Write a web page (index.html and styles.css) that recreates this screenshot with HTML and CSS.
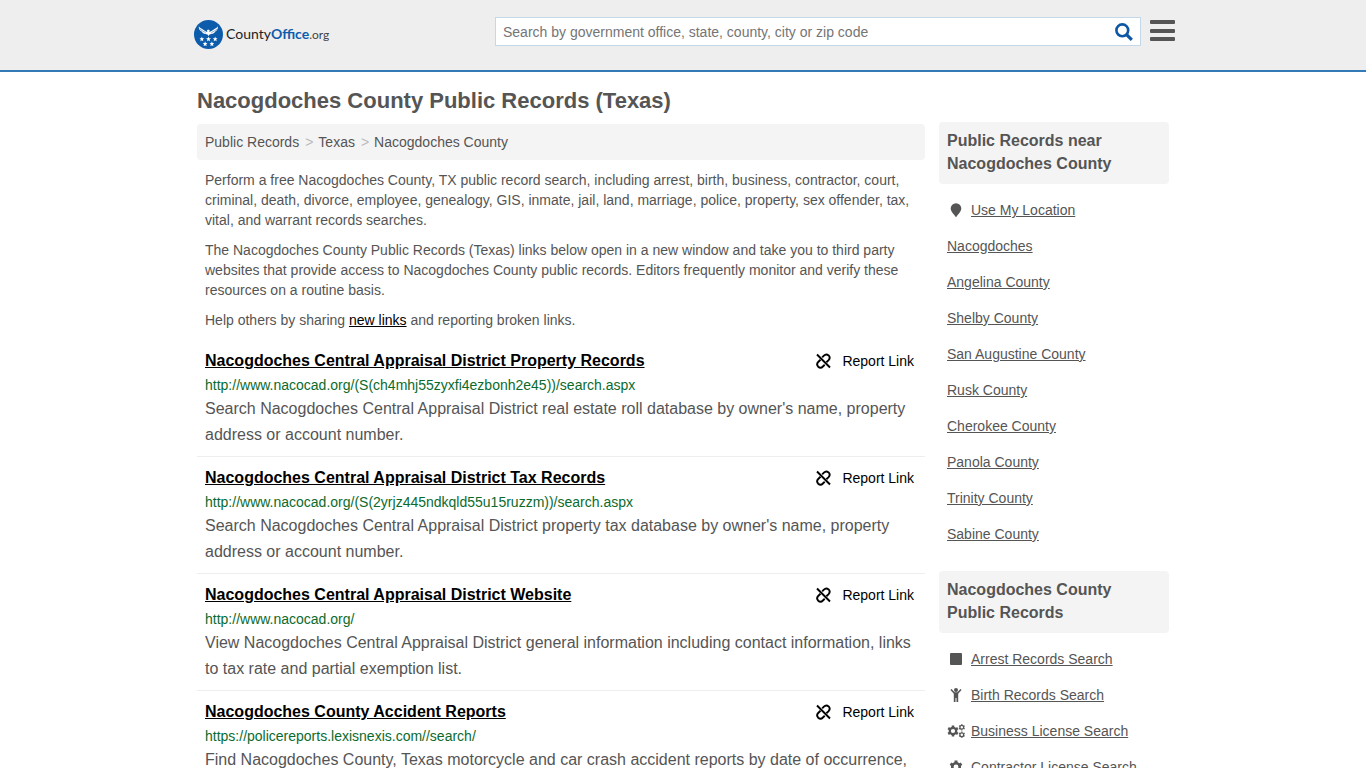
FILE: index.html
```html
<!DOCTYPE html>
<html lang="en">
<head>
<meta charset="utf-8">
<meta name="viewport" content="width=device-width, initial-scale=1">
<title>Nacogdoches County Public Records (Texas)</title>
<link rel="stylesheet" href="styles.css">
</head>
<body>
<svg class="defs" aria-hidden="true">
  <symbol id="unlink" viewBox="0 0 16 16">
    <g fill="none" stroke="currentColor" stroke-width="1.900">
      <path d="M2 1.500l13 13"/>
      <path d="M7.200 4.400l1.700-1.700C10.200 1.400 12.200 1.300 13.600 2.400c1.400 1.500 1.300 3.300 0 4.700L11.400 9.200"/>
      <path d="M5.500 6.800L3.200 9c-1.300 1.400-1.400 3.200 0 4.700 1.400 1.200 3.400 1.100 4.700-.2l1.800-1.700"/>
    </g>
  </symbol>
  <symbol id="gear" viewBox="0 0 16 16">
    <g fill="none" stroke="currentColor">
      <circle cx="8" cy="8" r="4.300" stroke-width="3"/>
      <path d="M8 .6v3M8 12.400v3M1.600 4.300l2.600 1.500M11.800 10.200l2.600 1.500M1.600 11.700l2.600-1.500M11.800 5.800l2.600-1.500" stroke-width="3.400"/>
    </g>
  </symbol>
  <symbol id="star" viewBox="0 0 10 10">
    <path d="M5 0l1.300 3.500L10 3.800 7.100 6.100 8.100 10 5 7.800 1.900 10l1-3.900L0 3.800l3.700-.3z" fill="currentColor"/>
  </symbol>
</svg>

<header class="site-header">
  <div class="header-inner">
    <a class="logo" href="#" aria-label="CountyOffice.org home">
      <svg class="logo-mark" viewBox="0 0 30 30" aria-hidden="true">
        <circle cx="15" cy="15" r="15" fill="#0d5cab"/>
        <path d="M5 6.500c1 1.800 3 2.600 5 3.800 1.600.9 2.600 1.700 3.700 2.200l-.2-1.900 1.100-.9 1.700.8-.5 1.900c1.100-.5 2.400-1.200 3.900-2.100 2-1.200 4-2 5-3.800.4 2.700-1 4.600-2.700 5.400-.8 1.700-2.200 2.300-3.700 2.400-.8.600-1.500.7-2.300.7l-1 1.600-1-1.600c-.8 0-1.500-.1-2.300-.7-1.500-.1-2.900-.7-3.700-2.400C6 11.100 4.600 9.200 5 6.500z" fill="#fff"/>
        <path d="M6 9.200c2 2 4 2.500 6 3.800M24 9.200c-2 2-4 2.500-6 3.800" stroke="#0d5cab" stroke-width=".5" fill="none"/>
        <g color="#fff">
          <use href="#star" x="5.500" y="17" width="5.200" height="5.200"/>
          <use href="#star" x="12.400" y="17" width="5.200" height="5.200"/>
          <use href="#star" x="19.300" y="17" width="5.200" height="5.200"/>
          <use href="#star" x="8.900" y="22" width="5.200" height="5.200"/>
          <use href="#star" x="15.900" y="22" width="5.200" height="5.200"/>
        </g>
      </svg>
      <span class="logo-text">County<b>Office</b><span class="logo-tld">.org</span></span>
    </a>
    <form class="search" role="search">
      <input class="search-input" type="text" aria-label="Search" placeholder="Search by government office, state, county, city or zip code">
      <button class="search-button" type="button" aria-label="Search">
        <svg viewBox="0 0 18 18" width="18" height="18" fill="none" stroke="#0d57a5" aria-hidden="true"><circle cx="7.300" cy="7.300" r="5.900" stroke-width="2.600"/><path d="M11.600 11.600l5.200 5.200" stroke-width="3.200"/></svg>
      </button>
    </form>
    <button class="menu-button" type="button" aria-label="Menu">
      <svg viewBox="0 0 25 22" width="25" height="22" fill="#555" aria-hidden="true"><rect width="25" height="4" rx="1"/><rect y="9" width="25" height="4" rx="1"/><rect y="17" width="25" height="4" rx="1"/></svg>
    </button>
  </div>
</header>

<div class="page">
  <main class="main">
    <h1>Nacogdoches County Public Records (Texas)</h1>
    <nav class="breadcrumb" aria-label="Breadcrumb">
      <a href="#">Public Records</a><span class="sep">&gt;</span><a href="#">Texas</a><span class="sep">&gt;</span><a href="#">Nacogdoches County</a>
    </nav>
    <div class="intro">
      <p>Perform a free Nacogdoches County, TX public record search, including arrest, birth, business, contractor, court, criminal, death, divorce, employee, genealogy, GIS, inmate, jail, land, marriage, police, property, sex offender, tax, vital, and warrant records searches.</p>
      <p>The Nacogdoches County Public Records (Texas) links below open in a new window and take you to third party websites that provide access to Nacogdoches County public records. Editors frequently monitor and verify these resources on a routine basis.</p>
      <p>Help others by sharing <a href="#">new links</a> and reporting broken links.</p>
    </div>

    <article class="record">
      <div class="record-head">
        <h2><a href="#">Nacogdoches Central Appraisal District Property Records</a></h2>
        <a class="report" href="#"><svg class="report-icon" aria-hidden="true"><use href="#unlink"/></svg>Report Link</a>
      </div>
      <div class="record-url">http://www.nacocad.org/(S(ch4mhj55zyxfi4ezbonh2e45))/search.aspx</div>
      <p class="record-text">Search Nacogdoches Central Appraisal District real estate roll database by owner's name, property address or account number.</p>
    </article>
    <article class="record">
      <div class="record-head">
        <h2><a href="#">Nacogdoches Central Appraisal District Tax Records</a></h2>
        <a class="report" href="#"><svg class="report-icon" aria-hidden="true"><use href="#unlink"/></svg>Report Link</a>
      </div>
      <div class="record-url">http://www.nacocad.org/(S(2yrjz445ndkqld55u15ruzzm))/search.aspx</div>
      <p class="record-text">Search Nacogdoches Central Appraisal District property tax database by owner's name, property address or account number.</p>
    </article>
    <article class="record">
      <div class="record-head">
        <h2><a href="#">Nacogdoches Central Appraisal District Website</a></h2>
        <a class="report" href="#"><svg class="report-icon" aria-hidden="true"><use href="#unlink"/></svg>Report Link</a>
      </div>
      <div class="record-url">http://www.nacocad.org/</div>
      <p class="record-text">View Nacogdoches Central Appraisal District general information including contact information, links to tax rate and partial exemption list.</p>
    </article>
    <article class="record">
      <div class="record-head">
        <h2><a href="#">Nacogdoches County Accident Reports</a></h2>
        <a class="report" href="#"><svg class="report-icon" aria-hidden="true"><use href="#unlink"/></svg>Report Link</a>
      </div>
      <div class="record-url">https://policereports.lexisnexis.com//search/</div>
      <p class="record-text">Find Nacogdoches County, Texas motorcycle and car crash accident reports by date of occurrence,</p>
    </article>
  </main>

  <aside class="sidebar">
    <section>
      <h2 class="side-title">Public Records near Nacogdoches County</h2>
      <ul class="side-list">
        <li><svg class="side-icon" viewBox="0 0 18 16" aria-hidden="true"><path d="M9 1.200a5.300 5.300 0 0 1 5.300 5.300C14.300 9.500 11 12.500 9 15.200 7 12.500 3.700 9.500 3.700 6.500A5.300 5.300 0 0 1 9 1.200z" fill="currentColor"/></svg><a href="#">Use My Location</a></li>
        <li><a href="#">Nacogdoches</a></li>
        <li><a href="#">Angelina County</a></li>
        <li><a href="#">Shelby County</a></li>
        <li><a href="#">San Augustine County</a></li>
        <li><a href="#">Rusk County</a></li>
        <li><a href="#">Cherokee County</a></li>
        <li><a href="#">Panola County</a></li>
        <li><a href="#">Trinity County</a></li>
        <li><a href="#">Sabine County</a></li>
      </ul>
    </section>
    <section>
      <h2 class="side-title">Nacogdoches County Public Records</h2>
      <ul class="side-list">
        <li><svg class="side-icon" viewBox="0 0 18 16" aria-hidden="true"><rect x="3" y="2" width="12" height="12" rx="1" fill="currentColor"/></svg><a href="#">Arrest Records Search</a></li>
        <li><svg class="side-icon" viewBox="0 0 18 16" aria-hidden="true"><circle cx="9" cy="3" r="2" fill="currentColor"/><path d="M4 2.500l3.500 3.700h3L14 2.500" fill="none" stroke="currentColor" stroke-width="1.600"/><path d="M6.800 5.500h4.400V15H9.500v-4h-1v4H6.800z" fill="currentColor"/></svg><a href="#">Birth Records Search</a></li>
        <li><svg class="side-icon" viewBox="0 0 18 16" aria-hidden="true"><use href="#gear" x="0" y="2" width="12" height="12"/><g fill="none" stroke="currentColor" stroke-width="1.300"><circle cx="14.800" cy="4.300" r="1.900"/><circle cx="14.800" cy="11.700" r="1.900"/></g><path d="M14.800 1.200v1M14.800 6.400v1M12 2.700l1 .6M16.600 5.300l1 .6M12 5.900l1-.6M16.600 3.300l1-.6M14.800 8.600v1M14.800 13.800v1M12 10.100l1 .6M16.600 12.700l1 .6M12 13.300l1-.6M16.600 10.700l1-.6" stroke="currentColor" stroke-width="1.200"/></svg><a href="#">Business License Search</a></li>
        <li><svg class="side-icon" viewBox="0 0 18 16" aria-hidden="true"><use href="#gear" x="2" y="1" width="14" height="14"/></svg><a href="#">Contractor License Search</a></li>
      </ul>
    </section>
  </aside>
</div>
</body>
</html>
```
FILE: styles.css
```css
* { box-sizing: border-box; }

body {
  margin: 0;
  background: #fff;
  color: #555;
  font: 14px/20px "Liberation Sans", Arial, sans-serif;
}

h1, h2, p, ul { margin: 0; padding: 0; }
a { color: inherit; }
button { border: 0; padding: 0; background: none; cursor: pointer; }
svg { display: block; }
.defs { display: none; }

.site-header {
  background: #eee;
  border-bottom: 2px solid #337ab7;
}
.header-inner {
  display: flex;
  align-items: flex-start;
  max-width: 982px;
  margin: 0 auto;
  padding: 17px 0 21px 2px;
}
.logo {
  display: flex;
  align-items: center;
  gap: 3px;
  padding-top: 3px;
  color: #222;
  text-decoration: none;
}
.logo-mark { width: 29px; height: 29px; }
.logo-text { font: 14px/20px Lato, sans-serif; }
.logo-text b { color: #0d5cab; }
.logo-tld { color: #444; font-size: 12px; }

.search {
  display: flex;
  flex: 0 1 646px;
  height: 29px;
  margin-left: auto;
  background: #fff;
  border: 1px solid #c3d9ea;
}
.search-input {
  flex: 1;
  min-width: 0;
  padding: 0 7px;
  border: 0;
  background: none;
  font: inherit;
}
.search-input::placeholder { color: #757575; opacity: 1; }
.search-button { padding: 0 7px; }
.menu-button { padding: 3px 0 0; margin: 0 -1px 0 9px; }

.page {
  display: flex;
  gap: 14px;
  max-width: 972px;
  margin: 0 auto;
}
.main { flex: 1; min-width: 0; }
h1 {
  padding: 15px 0 9px;
  font-size: 22px;
  line-height: 28px;
}
.breadcrumb {
  padding: 8px;
  background: #f4f4f4;
  border-radius: 4px;
}
.breadcrumb a { text-decoration: none; }
.sep { padding: 0 5px 0 6px; color: #bbb; }

.intro {
  display: flex;
  flex-direction: column;
  gap: 10px;
  padding: 10px 8px;
}
.intro a { color: #000; }

.record {
  padding: 7px 8px 8px;
  border-bottom: 1px solid #eee;
}
.record-head {
  display: flex;
  justify-content: space-between;
  padding-right: 3px;
  color: #000;
  line-height: 28px;
}
.record-head h2 { font-size: 16px; }
.report {
  display: flex;
  align-items: center;
  gap: 11px;
  text-decoration: none;
}
.report-icon { width: 16px; height: 16px; }
.record-url { color: #0b6b2e; line-height: 21px; }
.record-text { font-size: 16px; line-height: 26px; }

.sidebar { flex: 0 0 230px; padding-top: 50px; }
.side-title {
  padding: 7px 8px 9px;
  background: #f4f4f4;
  border-radius: 4px;
  font-size: 16px;
  line-height: 23px;
}
.side-list {
  padding: 8px 8px 19px;
  list-style: none;
}
.side-list li {
  display: flex;
  align-items: center;
  gap: 6px;
  height: 36px;
}
.side-icon { width: 18px; height: 16px; }
```
